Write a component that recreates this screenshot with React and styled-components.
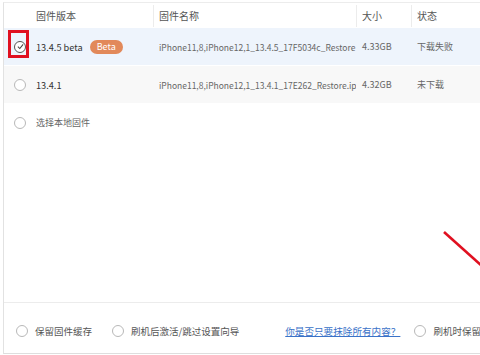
import React from "react";
import styled, { createGlobalStyle } from "styled-components";

const Global = createGlobalStyle`
  html, body {
    margin: 0;
    padding: 0;
    background: #fff;
    overflow: hidden;
  }
  body {
    font-family: "Noto Sans CJK SC", "Noto Sans", sans-serif;
  }
`;

const Page = styled.div`
  position: relative;
  width: 480px;
  height: 355px;
  overflow: hidden;
  background: #fff;
`;

const Frame = styled.div`
  position: absolute;
  left: 3px;
  top: 2px;
  width: 600px;
  height: 350px;
  border-left: 1px solid #e2e2e2;
  border-top: 1px solid #ececec;
  border-bottom: 1px solid #dedede;
  display: flex;
  flex-direction: column;
`;

const Table = styled.div`
  flex: 1;
  display: flex;
  flex-direction: column;
`;

const cols = "32px 117px 203px 55px 1fr";

const HeadRow = styled.div`
  display: grid;
  grid-template-columns: ${cols};
  height: 25px;
  align-items: center;
  font-size: 10px;
  color: #555;
`;

const HeadCell = styled.div`
  height: 22px;
  line-height: 22px;
  border-left: ${(p) => (p.$sep ? "1px solid #ececec" : "none")};
  padding-left: ${(p) => (p.$sep ? "5px" : "0")};
`;

const Row = styled.div`
  display: grid;
  grid-template-columns: ${cols};
  height: 37px;
  align-items: center;
  font-size: 9px;
  color: #666;
  background: ${(p) => p.$bg || "#fff"};
  margin-bottom: 1px;
`;

const Cell = styled.div`
  padding-left: ${(p) => (p.$pad ? "6px" : "0")};
  padding-right: ${(p) => (p.$pad ? "3px" : "0")};
  font-size: ${(p) => p.$size || "inherit"};
  white-space: nowrap;
  overflow: hidden;
  display: flex;
  align-items: center;
  gap: 7px;
`;

const Version = styled.span`
  color: #333;
  font-size: 9.2px;
`;

const Badge = styled.span`
  background: #e2895a;
  color: #fff;
  border-radius: 8px;
  font-size: 9px;
  padding: 0 7px;
  height: 14px;
  line-height: 14px;
`;

const RadioCell = styled.div`
  display: flex;
  justify-content: center;
  align-items: center;
  height: 100%;
  position: relative;
`;

const Radio = styled.span`
  width: 10px;
  height: 10px;
  border-radius: 50%;
  border: 1px solid ${(p) => (p.$checked ? "#555" : "#b8b8b8")};
  background: #fff;
  display: inline-flex;
  align-items: center;
  justify-content: center;
  flex-shrink: 0;
`;

const Highlight = styled.div`
  position: absolute;
  left: 4px;
  top: 2px;
  width: 15px;
  height: 22px;
  border: 3px solid #e01020;
`;

const Bottom = styled.div`
  box-sizing: border-box;
  height: 51px;
  flex-shrink: 0;
  border-top: 1px solid #ececec;
  display: flex;
  align-items: center;
  padding: 6px 0 0 12px;
  font-size: 9.5px;
  color: #555;
  white-space: nowrap;
`;

const Option = styled.label`
  display: flex;
  align-items: center;
  gap: 7px;
  margin-right: ${(p) => p.$mr || "20px"};
`;

const Link = styled.a`
  color: #3a72c8;
  text-decoration: underline;
  margin-right: 14px;
  font-size: 9.6px;
`;

const Annotation = styled.svg`
  position: absolute;
  left: 0;
  top: 0;
  pointer-events: none;
`;

function Check() {
  return (
    <svg width="7" height="7" viewBox="0 0 8 8">
      <path d="M1 4.2 L3.2 6.3 L7 1.6" fill="none" stroke="#444" strokeWidth="1.2" />
    </svg>
  );
}

const rows = [
  {
    version: "13.4.5 beta",
    beta: true,
    name: "iPhone11,8,iPhone12,1_13.4.5_17F5034c_Restore",
    size: "4.33GB",
    status: "下载失败",
    checked: true,
    bg: "#eef4fc",
  },
  {
    version: "13.4.1",
    name: "iPhone11,8,iPhone12,1_13.4.1_17E262_Restore.ipsw",
    size: "4.32GB",
    status: "未下载",
    bg: "#f8f8f8",
  },
];

export default function App() {
  return (
    <Page>
      <Global />
      <Frame>
        <Table>
          <HeadRow>
            <div />
            <HeadCell>固件版本</HeadCell>
            <HeadCell $sep>固件名称</HeadCell>
            <HeadCell $sep>大小</HeadCell>
            <HeadCell $sep>状态</HeadCell>
          </HeadRow>
          {rows.map((r) => (
            <Row key={r.version} $bg={r.bg}>
              <RadioCell>
                <Radio $checked={r.checked}>{r.checked && <Check />}</Radio>
                {r.checked && <Highlight />}
              </RadioCell>
              <Cell>
                <Version>{r.version}</Version>
                {r.beta && <Badge>Beta</Badge>}
              </Cell>
              <Cell $pad $size="8.5px">{r.name}</Cell>
              <Cell $pad>{r.size}</Cell>
              <Cell $pad>{r.status}</Cell>
            </Row>
          ))}
          <Row>
            <RadioCell>
              <Radio />
            </RadioCell>
            <Cell>选择本地固件</Cell>
          </Row>
        </Table>
        <Bottom>
          <Option>
            <Radio />
            保留固件缓存
          </Option>
          <Option $mr="46px">
            <Radio />
            刷机后激活/跳过设置向导
          </Option>
          <Link>你是否只要抹除所有内容？</Link>
          <Option>
            <Radio />
            刷机时保留用户资料
          </Option>
        </Bottom>
      </Frame>
      <Annotation width="480" height="355">
        <line x1="444" y1="232" x2="482" y2="266" stroke="#e01020" strokeWidth="2.6" />
      </Annotation>
    </Page>
  );
}
